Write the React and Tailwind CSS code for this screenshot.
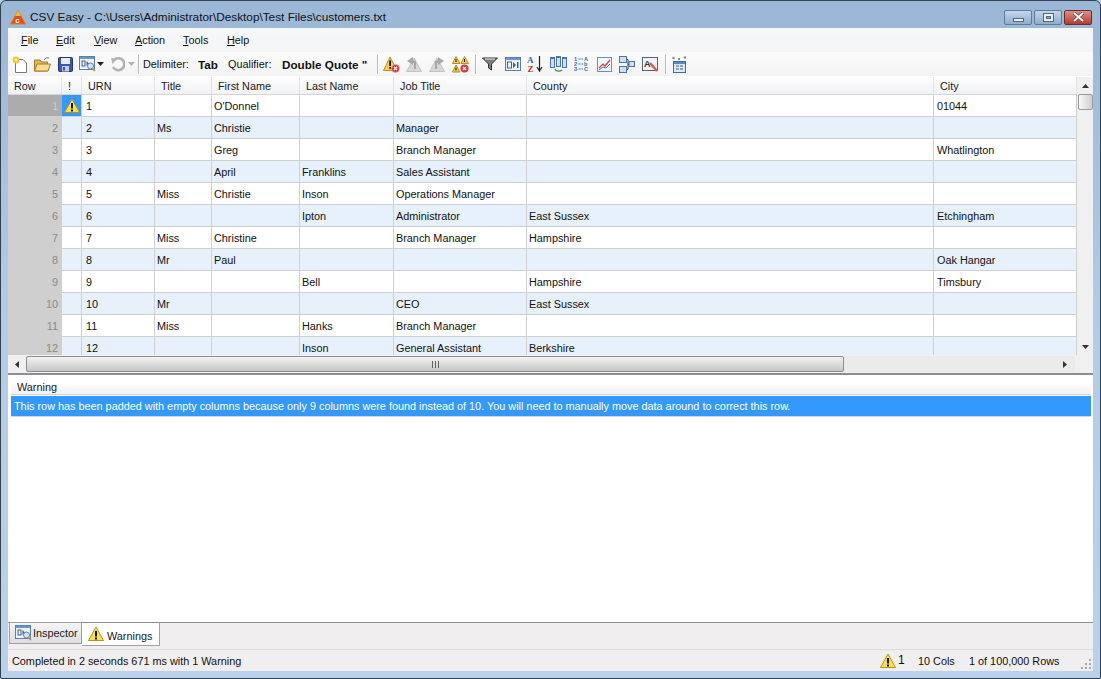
import React from "react";

const columns = [
  { name: "!", w: "w-[20px]" },
  { name: "URN", w: "w-[73px]" },
  { name: "Title", w: "w-[57px]" },
  { name: "First Name", w: "w-[88px]" },
  { name: "Last Name", w: "w-[94px]" },
  { name: "Job Title", w: "w-[133px]" },
  { name: "County", w: "w-[407px]" },
  { name: "City", w: "w-[143px]" },
];

const rows = [
  ["1", "", "O'Donnel", "", "", "", "01044"],
  ["2", "Ms", "Christie", "", "Manager", "", ""],
  ["3", "", "Greg", "", "Branch Manager", "", "Whatlington"],
  ["4", "", "April", "Franklins", "Sales Assistant", "", ""],
  ["5", "Miss", "Christie", "Inson", "Operations Manager", "", ""],
  ["6", "", "", "Ipton", "Administrator", "East Sussex", "Etchingham"],
  ["7", "Miss", "Christine", "", "Branch Manager", "Hampshire", ""],
  ["8", "Mr", "Paul", "", "", "", "Oak Hangar"],
  ["9", "", "", "Bell", "", "Hampshire", "Timsbury"],
  ["10", "Mr", "", "", "CEO", "East Sussex", ""],
  ["11", "Miss", "", "Hanks", "Branch Manager", "", ""],
  ["12", "", "", "Inson", "General Assistant", "Berkshire", ""],
];

function WarnIcon({ size = 16 }) {
  return (
    <svg width={size} height={size} viewBox="0 0 16 16" className="shrink-0">
      <path d="M8 1 L15.5 14.5 H0.5 Z" fill="#fde047" stroke="#b8901a" strokeLinejoin="round" />
      <rect x="7" y="5" width="2" height="5.5" fill="#111" />
      <rect x="7" y="11.5" width="2" height="2" fill="#111" />
    </svg>
  );
}

function WarnStop() {
  return (
    <svg width="17" height="17" viewBox="0 0 17 17">
      <path d="M7 1 L14 14.5 H0.5 Z" fill="#f5d142" stroke="#b8901a" strokeLinejoin="round" />
      <rect x="6.2" y="4.5" width="1.8" height="5.5" fill="#111" />
      <rect x="6.2" y="11" width="1.8" height="1.8" fill="#111" />
      <circle cx="12.5" cy="12.5" r="4" fill="#d9363a" stroke="#f4b0a8" strokeWidth="0.6" />
      <path d="M11 11 L14 14 M14 11 L11 14" stroke="#fff" strokeWidth="1.2" />
    </svg>
  );
}

function GreyWarn({ flip }) {
  return (
    <svg width="17" height="17" viewBox="0 0 17 17">
      <path d="M8 2 L15.5 15.5 H0.5 Z" fill="#d8d8d8" stroke="#c4c4c4" strokeLinejoin="round" />
      <path d={flip ? "M9 1 L15 5 L9 9 L9 7 L8 7 L8 13 L6 13 L6 5 L9 4 Z" : "M7 1 L1 5 L7 9 L7 7 L8 7 L8 13 L10 13 L10 5 L7 4 Z"} fill="#a8a8a8" />
    </svg>
  );
}

function DoubleWarn() {
  return (
    <svg width="17" height="17" viewBox="0 0 17 17">
      <path d="M4 0.5 L8 7.5 H0.5 Z" fill="#f5d142" stroke="#b8901a" strokeLinejoin="round" />
      <path d="M12.5 0.5 L16.5 7.5 H9 Z" fill="#f5d142" stroke="#b8901a" strokeLinejoin="round" />
      <path d="M4 9 L8 16 H0.5 Z" fill="#f5d142" stroke="#b8901a" strokeLinejoin="round" />
      <rect x="3.5" y="3" width="1" height="3" fill="#111" />
      <rect x="12" y="3" width="1" height="3" fill="#111" />
      <rect x="3.5" y="11.5" width="1" height="3" fill="#111" />
      <circle cx="12.5" cy="12.5" r="4" fill="#d9363a" />
      <path d="M11 11 L14 14 M14 11 L11 14" stroke="#fff" strokeWidth="1.2" />
    </svg>
  );
}

function InspectorIcon() {
  return (
    <svg width="17" height="16" viewBox="0 0 17 16" className="shrink-0">
      <rect x="0.5" y="0.5" width="15" height="13" fill="#eef3fa" stroke="#5a7fb0" />
      <rect x="1" y="1" width="14" height="2" fill="#6f96c8" />
      <rect x="3" y="5" width="3" height="5" fill="none" stroke="#44608a" />
      <path d="M7.5 5 L10 7.5 L7.5 10 Z" fill="#44608a" />
      <circle cx="11.5" cy="10" r="3" fill="#cfe6f8" stroke="#6b7f95" />
      <path d="M13.5 12.5 L16 15" stroke="#c98a2c" strokeWidth="1.6" />
    </svg>
  );
}

function CaretDown({ color = "#222" }) {
  return (
    <svg width="7" height="4" viewBox="0 0 7 4" className="mx-[1px]">
      <path d="M0 0 H7 L3.5 4 Z" fill={color} />
    </svg>
  );
}

function Separator({ className = "" }) {
  return <div className={`w-[1px] h-[19px] bg-[#b9b9b9] border-r border-white box-content ${className}`} />;
}

function ToolIcons() {
  return (
    <div className="flex items-center">
      <div className="ml-[4px]"><WarnStop /></div>
      <div className="ml-[6px]"><GreyWarn /></div>
      <div className="ml-[6px]"><GreyWarn flip /></div>
      <div className="ml-[6px]"><DoubleWarn /></div>
      <Separator className="ml-[6px] mr-[5px]" />
      <svg width="16" height="14" viewBox="0 0 16 14">
        <path d="M0.5 1 H15.5 L9.5 7 V13 L6.5 11 V7 Z" fill="#7d7d7d" stroke="#333" strokeLinejoin="round" />
        <path d="M3 2 H13" stroke="#eee" />
      </svg>
      <svg width="16" height="14" viewBox="0 0 16 14" className="ml-[7px]">
        <rect x="0.5" y="0.5" width="15" height="13" fill="#eef3fa" stroke="#5a7fb0" />
        <rect x="1" y="1" width="14" height="2" fill="#6f96c8" />
        <rect x="2.5" y="5" width="4" height="6" fill="none" stroke="#44608a" />
        <path d="M8 5 L11 8 L8 11 Z" fill="#44608a" />
        <rect x="12" y="5" width="1.5" height="6" fill="#44608a" />
      </svg>
      <svg width="17" height="18" viewBox="0 0 17 18" className="ml-[6px]">
        <text x="0" y="8" fontSize="9" fontWeight="700" fill="#3a5fa8" fontFamily="Liberation Serif, serif">A</text>
        <text x="0.5" y="17" fontSize="9" fontWeight="700" fill="#a83a3a" fontFamily="Liberation Serif, serif">Z</text>
        <path d="M12.5 1 V15 M10 12 L12.5 16 L15 12" stroke="#222" strokeWidth="1.2" fill="none" />
      </svg>
      <svg width="17" height="18" viewBox="0 0 17 18" className="ml-[6px]">
        <rect x="0.5" y="2.5" width="4" height="10" fill="#cfe0f5" stroke="#4a75b0" />
        <rect x="6.5" y="1.5" width="4" height="10" fill="#cfe0f5" stroke="#4a75b0" />
        <rect x="12.5" y="2.5" width="4" height="10" fill="#cfe0f5" stroke="#4a75b0" />
        <path d="M1 3 H4 M7 2 H10 M13 3 H16" stroke="#4a75b0" strokeWidth="2" />
        <path d="M5 14 A4 3 0 0 0 12 15" stroke="#3a9a3a" strokeWidth="1.3" fill="none" />
      </svg>
      <svg width="15" height="16" viewBox="0 0 15 16" className="ml-[7px]" fontFamily="Liberation Sans, sans-serif" fontSize="5.6" fontWeight="700" fill="#2f6fb0">
        <text x="0" y="5">1</text>
        <text x="0" y="10">2</text>
        <text x="0" y="15">3</text>
        <text x="10" y="5">A</text>
        <text x="10" y="10">b</text>
        <text x="10" y="15">C</text>
        <path d="M4.5 3 H9 M4.5 8 H9 M4.5 13 H9" stroke="#2f6fb0" strokeDasharray="2 1" />
      </svg>
      <svg width="15" height="15" viewBox="0 0 15 15" className="ml-[8px]">
        <rect x="0.5" y="0.5" width="14" height="14" fill="#f4f8fd" stroke="#6a8fbd" />
        <path d="M2 11 L6 7 L8 9 L13 3" stroke="#d9363a" strokeWidth="1.2" fill="none" />
        <path d="M2 13 L6 10 L9 11 L13 7" stroke="#3a78b8" fill="none" />
      </svg>
      <svg width="16" height="17" viewBox="0 0 16 17" className="ml-[7px]">
        <rect x="0.5" y="0.5" width="7" height="6" fill="#cfe0f5" stroke="#4a75b0" />
        <rect x="0.5" y="10.5" width="7" height="6" fill="#cfe0f5" stroke="#4a75b0" />
        <rect x="10" y="5.5" width="5.5" height="5" fill="#cfe0f5" stroke="#4a75b0" />
        <path d="M8 3.5 H9 V13.5 H8 M9 8.5 H10" stroke="#444" fill="none" />
      </svg>
      <svg width="16" height="15" viewBox="0 0 16 15" className="ml-[7px]">
        <rect x="0.5" y="0.5" width="15" height="13" fill="#f0f3f7" stroke="#55657a" />
        <text x="2" y="10" fontSize="9" fontWeight="700" fill="#333" fontFamily="Liberation Sans, sans-serif">A</text>
        <path d="M8 6 L15 14" stroke="#e0564a" strokeWidth="2.4" />
      </svg>
      <Separator className="ml-[7px] mr-[5px]" />
      <svg width="15" height="17" viewBox="0 0 15 17">
        <rect x="1.5" y="5.5" width="12" height="11" fill="#dbe8f6" stroke="#4a6a96" />
        <rect x="2" y="6" width="11" height="2" fill="#5d8ac4" />
        <path d="M4 10 H7 M8 10 H11 M4 13 H7 M8 13 H11" stroke="#44608a" />
        <circle cx="1.5" cy="2" r="1.2" fill="#888" />
        <circle cx="7" cy="3" r="1.2" fill="#888" />
        <circle cx="13" cy="1.5" r="1.2" fill="#888" />
      </svg>
    </div>
  );
}

function App() {
  return (
    <div className="w-[1101px] h-[679px] overflow-hidden bg-[#b9d1ea] font-['Liberation_Sans',sans-serif] text-[10.85px] leading-[13px] text-[#1a1a1a]">
      <div className="h-full flex flex-col border border-[#33404d] rounded-t-[6px] rounded-b-[2px] px-[7px] pb-[7px] bg-gradient-to-b from-[#9bb7d6] via-[#b4cde7] to-[#b9d1ea]">
        {/* title bar */}
        <div className="h-[27px] shrink-0 flex items-center justify-between">
          <div className="flex items-center mt-[6px] ml-[2px]">
            <svg width="16" height="15" viewBox="0 0 16 15">
              <path d="M8 0.5 L15.5 14 H0.5 Z" fill="#e8491d" stroke="#d8830f" />
              <path d="M8 0.5 L11 6 H5 Z" fill="#f7b733" />
              <text x="5.2" y="12.5" fontSize="8" fontWeight="700" fill="#fff" fontFamily="Liberation Sans, sans-serif">c</text>
            </svg>
            <span className="ml-[4px] text-[11.8px] text-[#111]">CSV Easy - C:\Users\Administrator\Desktop\Test Files\customers.txt</span>
          </div>
          <div className="flex items-center gap-[2px] mt-[5px] mr-[1px]">
            <div className="w-[28px] h-[15px] rounded-[2px] border border-[#5d7a99] bg-gradient-to-b from-[#c3d7ec] to-[#8fadcc] flex items-end justify-center pb-[2px]">
              <div className="w-[11px] h-[4px] bg-[#e9eef4] border border-[#55677c]" />
            </div>
            <div className="w-[28px] h-[15px] rounded-[2px] border border-[#5d7a99] bg-gradient-to-b from-[#c3d7ec] to-[#8fadcc] flex items-center justify-center">
              <div className="w-[11px] h-[9px] bg-[#e9eef4] border border-[#55677c] flex items-center justify-center">
                <div className="w-[5px] h-[3px] bg-[#8fadcc] border border-[#55677c]" />
              </div>
            </div>
            <div className="w-[28px] h-[15px] rounded-[2px] border border-[#6b2d2a] bg-gradient-to-b from-[#dd8f84] to-[#b5392c] flex items-center justify-center">
              <svg width="13" height="10" viewBox="0 0 13 10">
                <path d="M2 1 L11 9 M11 1 L2 9" stroke="#55403f" strokeWidth="3.4" />
                <path d="M2 1 L11 9 M11 1 L2 9" stroke="#f4f1f0" strokeWidth="2.2" />
              </svg>
            </div>
          </div>
        </div>

        {/* client area */}
        <div className="flex-1 min-h-0 flex flex-col bg-white">
          {/* menu */}
          <div className="h-[24px] shrink-0 flex items-center pl-[13px] bg-gradient-to-b from-[#f6f8fb] to-[#f5f5f5] text-[#111]">
            <span className="w-[35px]"><u>F</u>ile</span>
            <span className="w-[38px]"><u>E</u>dit</span>
            <span className="w-[41px]"><u>V</u>iew</span>
            <span className="w-[48px]"><u>A</u>ction</span>
            <span className="w-[44px]"><u>T</u>ools</span>
            <span><u>H</u>elp</span>
          </div>

          {/* toolbar */}
          <div className="h-[25px] shrink-0 flex items-center pl-[4px] bg-gradient-to-b from-[#fcfcfc] to-[#f3f3f3] text-[#111] border-b border-white">
            <svg width="16" height="17" viewBox="0 0 16 17">
              <path d="M3.5 3.5 H11 L14.5 7 V16.5 H3.5 Z" fill="#fff" stroke="#777" />
              <circle cx="4" cy="4" r="3.4" fill="#f6c430" />
              <circle cx="4" cy="4" r="1.4" fill="#fdf1b0" />
            </svg>
            <svg width="17" height="15" viewBox="0 0 17 15" className="ml-[6px]">
              <path d="M0.5 3 H6 L7.5 5 H13.5 V14 H0.5 Z" fill="#e5b758" stroke="#a57a28" />
              <path d="M3 7 H16.5 L14 14 H0.5 Z" fill="#f8dc8f" stroke="#a57a28" />
              <path d="M10 3 A4 4 0 0 1 15 1" stroke="#5d7fa8" fill="none" />
            </svg>
            <svg width="15" height="15" viewBox="0 0 15 15" className="ml-[7px]">
              <rect x="0.5" y="0.5" width="14" height="14" rx="1" fill="#3f55b5" stroke="#2a3577" />
              <rect x="3" y="1" width="9" height="6" fill="#e8ecf5" />
              <rect x="4" y="9" width="7" height="5.5" fill="#c8ccd8" />
              <rect x="5" y="10" width="2" height="3.5" fill="#3f55b5" />
            </svg>
            <div className="flex items-center ml-[6px]">
              <InspectorIcon />
              <CaretDown />
            </div>
            <div className="flex items-center ml-[5px]">
              <svg width="15" height="15" viewBox="0 0 15 15">
                <path d="M4 3 A6 6 0 1 1 3 10" fill="none" stroke="#b2b2b2" strokeWidth="2.6" />
                <path d="M1 1 L7 2 L2.5 7 Z" fill="#b2b2b2" />
              </svg>
              <div className="ml-[2px]"><CaretDown color="#b0b0b0" /></div>
            </div>
            <Separator className="ml-[2px] mr-[3px]" />
            <span className="w-[55px]">Delimiter:</span>
            <span className="w-[30px] font-bold text-[11.7px]">Tab</span>
            <span className="w-[54px]">Qualifier:</span>
            <span className="w-[95px] font-bold text-[11.7px] whitespace-nowrap">Double Quote "</span>
            <Separator />
            <ToolIcons />
          </div>

          {/* grid */}
          <div className="h-[278px] shrink-0 flex">
            <div className="flex-1 min-w-0 overflow-hidden">
              <div className="h-[17px] flex bg-gradient-to-b from-[#fdfdfd] to-[#f1f2f4] border-b-2 border-[#d5d5d5] box-content -mb-[1px]">
                <div className="w-[54px] pl-[6px] pt-[2px] shrink-0 border-r border-[#e4e4e4] flex items-center">Row</div>
                {columns.map((c) => (
                  <div key={c.name} className={`${c.w} shrink-0 pl-[6px] pt-[2px] border-r border-[#e4e4e4] flex items-center`}>{c.name}</div>
                ))}
              </div>
              {rows.map((row, i) => (
                <div key={row[0]} className={`h-[22px] flex border-b border-[#d0d0d0] ${i % 2 ? "bg-[#e6f1fc]" : "bg-white"}`}>
                  <div className={`w-[54px] shrink-0 pr-[4px] pt-[2px] flex items-center justify-end ${i === 0 ? "bg-[#acacac] text-[#cfcfcf]" : "bg-[#cfcfcf] text-[#8a8a8a]"}`}>{row[0]}</div>
                  <div className={`w-[20px] shrink-0 border-r border-[#d0d0d0] flex items-center justify-center ${i === 0 ? "bg-[#3399ff]" : ""}`}>
                    {i === 0 && <WarnIcon />}
                  </div>
                  {row.map((cell, j) => (
                    <div key={j} className={`${columns[j + 1].w} shrink-0 pt-[2px] border-r border-[#d0d0d0] flex items-center text-[#111] whitespace-nowrap ${j === 0 ? "pl-[4px]" : j === 6 ? "pl-[3px]" : "pl-[2px]"}`}>{cell}</div>
                  ))}
                </div>
              ))}
            </div>
            {/* vertical scrollbar */}
            <div className="w-[16px] shrink-0 bg-[#f0f0f0] flex flex-col items-center">
              <div className="h-[17px] flex items-center justify-center">
                <svg width="7" height="4" viewBox="0 0 7 4"><path d="M0 4 H7 L3.5 0 Z" fill="#333" /></svg>
              </div>
              <div className="w-[15px] h-[16px] rounded-[2px] border border-[#9a9a9a] bg-gradient-to-r from-[#f8f8f8] to-[#cfcfcf]" />
              <div className="flex-1" />
              <div className="h-[17px] flex items-center justify-center">
                <CaretDown color="#333" />
              </div>
            </div>
          </div>

          {/* horizontal scrollbar */}
          <div className="h-[18px] shrink-0 flex items-center bg-[#f0f0f0]">
            <div className="w-[18px] shrink-0 flex justify-center">
              <svg width="4" height="7" viewBox="0 0 4 7"><path d="M4 0 V7 L0 3.5 Z" fill="#333" /></svg>
            </div>
            <div className="w-[818px] h-[16px] shrink-0 rounded-[2px] border border-[#8f8f8f] bg-gradient-to-b from-[#f4f4f4] to-[#c6c6c6] flex items-center justify-center">
              <div className="w-[7px] h-[7px] bg-[repeating-linear-gradient(90deg,#666_0,#666_1px,transparent_1px,transparent_3px)]" />
            </div>
            <div className="w-[231px] h-[16px] shrink-0 bg-[#ebebeb] flex items-center justify-end pr-[8px]">
              <svg width="4" height="7" viewBox="0 0 4 7"><path d="M0 0 V7 L4 3.5 Z" fill="#333" /></svg>
            </div>
          </div>

          <div className="h-[2px] shrink-0 bg-[#8d8d97]" />

          {/* warning panel */}
          <div className="flex-1 min-h-0 bg-white pt-[10px] pl-[3px] pr-[2px]">
            <div className="h-[9px] flex items-center pl-[6px] bg-gradient-to-b from-[#fbfbfb] to-[#f1f2f4] border-b border-[#d5d5d5] box-content">
              <span className="-mt-[5px]">Warning</span>
            </div>
            <div className="h-[21px] mt-[1px] flex items-center pl-[3px] bg-[#3399ff] text-white border-b border-[#d5d5d5]">
              This row has been padded with empty columns because only 9 columns were found instead of 10. You will need to manually move data around to correct this row.
            </div>
          </div>

          {/* tabs */}
          <div className="h-[27px] shrink-0 flex items-start border-t border-[#8d8d97] bg-[#f0eeee] pl-[1px]">
            <div className="h-[22px] w-[73px] -mt-[1px] flex items-center pl-[5px] gap-[1px] border border-[#a0a0a0] bg-gradient-to-b from-[#f5f5f5] to-[#dedede]">
              <InspectorIcon />
              <span className="mt-[1px]">Inspector</span>
            </div>
            <div className="h-[24px] w-[78px] -mt-[1px] flex items-center pl-[6px] gap-[3px] border border-t-[#8d8d97] border-[#a0a0a0] border-l-0 bg-white">
              <WarnIcon />
              <span className="mt-[5px]">Warnings</span>
            </div>
          </div>

          {/* status bar */}
          <div className="h-[22px] shrink-0 flex items-center pl-[4px] bg-[#f0eeee] border-t border-[#dcdcdc] text-[#111]">
            <span className="mt-[2px]">Completed in 2 seconds 671 ms with 1 Warning</span>
            <div className="flex-1" />
            <WarnIcon />
            <span className="ml-[2px] w-[20px] text-[12px]">1</span>
            <span className="w-[51px] mt-[2px]">10 Cols</span>
            <span className="w-[112px] mt-[2px]">1 of 100,000 Rows</span>
            <svg width="11" height="11" viewBox="0 0 11 11" className="mr-[1px] mt-[6px]">
              <path d="M8 1 h2 v2 h-2 z M4 5 h2 v2 h-2 z M8 5 h2 v2 h-2 z M0 9 h2 v2 h-2 z M4 9 h2 v2 h-2 z M8 9 h2 v2 h-2 z" fill="#a9a9a9" />
            </svg>
          </div>
        </div>
      </div>
    </div>
  );
}

export default App;
